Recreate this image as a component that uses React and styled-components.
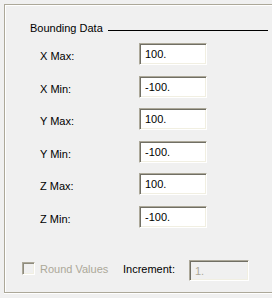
import styled, { createGlobalStyle } from "styled-components";

const GlobalStyle = createGlobalStyle`
  html, body {
    margin: 0;
    padding: 0;
    background: #f0f0f0;
    overflow: hidden;
  }
`;

const rows = [
  { label: "X Max:", value: "100." },
  { label: "X Min:", value: "-100." },
  { label: "Y Max:", value: "100." },
  { label: "Y Min:", value: "-100." },
  { label: "Z Max:", value: "100." },
  { label: "Z Min:", value: "-100." },
];

const App = () => {
  return (
    <Page>
      <GlobalStyle />
      <Frame>
        <GroupHeader>
          <GroupTitle>Bounding Data</GroupTitle>
          <GroupRule />
        </GroupHeader>
        <FieldList>
          {rows.map((r) => (
            <FieldRow key={r.label}>
              <FieldLabel>{r.label}</FieldLabel>
              <Edit readOnly defaultValue={r.value} />
            </FieldRow>
          ))}
        </FieldList>
        <Footer>
          <CheckBox />
          <FooterText $disabled $width={83}>Round Values</FooterText>
          <FooterText $gap={0} $width={66}>Increment:</FooterText>
          <Edit readOnly disabled defaultValue="1." $width={60} />
        </Footer>
      </Frame>
    </Page>
  );
};

const Page = styled.div`
  width: 272px;
  height: 298px;
  overflow: hidden;
  background: #f0f0f0;
  font-family: "Liberation Sans", Arial, sans-serif;
  font-size: 11px;
  color: #000;
  padding: 4px 0 0 4px;
  box-sizing: border-box;
`;

const Frame = styled.div`
  width: 300px;
  height: 289px;
  box-sizing: border-box;
  border: 1px solid #aca899;
  box-shadow: inset 1px 1px 0 #fff, 0 1px 0 #fff;
  padding-top: 17px;
  display: flex;
  flex-direction: column;
`;

const GroupHeader = styled.div`
  display: flex;
  align-items: flex-start;
  height: 13px;
  padding-left: 25px;
`;

const GroupTitle = styled.span`
  width: 78px;
  line-height: 13px;
  white-space: nowrap;
`;

const GroupRule = styled.div`
  margin-top: 8px;
  width: 160px;
  height: 1px;
  background: #000;
`;

const FieldList = styled.div`
  display: flex;
  flex-direction: column;
  gap: 10.5px;
  margin-top: 8px;
  padding-left: 35px;
`;

const FieldRow = styled.div`
  display: flex;
  align-items: flex-start;
  height: 22px;
`;

const FieldLabel = styled.span`
  width: 99px;
  line-height: 13px;
  margin-top: 7px;
`;

const Edit = styled.input`
  width: ${(p) => p.$width || 68}px;
  height: 22px;
  margin: 0;
  box-sizing: border-box;
  border: 1px solid;
  border-color: #aca899 #fff #fff #aca899;
  box-shadow: inset 1px 1px 0 #716f64, inset -1px -1px 0 #f1efe2;
  background: #fff;
  padding: 0 0 0 5px;
  font-family: "Liberation Sans", Arial, sans-serif;
  font-size: 11px;
  line-height: 13px;
  color: #000;
  outline: none;

  &:disabled {
    height: 21px;
    background: #f0f0f0;
    color: #aca899;
  }
`;

const Footer = styled.div`
  display: flex;
  align-items: flex-start;
  margin-top: 32.5px;
  padding-left: 17px;
`;

const CheckBox = styled.span`
  width: 13px;
  height: 13px;
  margin-top: 2px;
  box-sizing: border-box;
  border: 1px solid;
  border-color: #aca899 #fff #fff #aca899;
  box-shadow: inset 1px 1px 0 #8e8b7d, inset -1px -1px 0 #f1efe2;
  background: #f0f0f0;
`;

const FooterText = styled.span`
  width: ${(p) => p.$width}px;
  line-height: 13px;
  margin-top: 3px;
  margin-left: ${(p) => (p.$gap ?? 5)}px;
  color: ${(p) => (p.$disabled ? "#aca899" : "#000")};
  white-space: nowrap;
`;

export default App;
